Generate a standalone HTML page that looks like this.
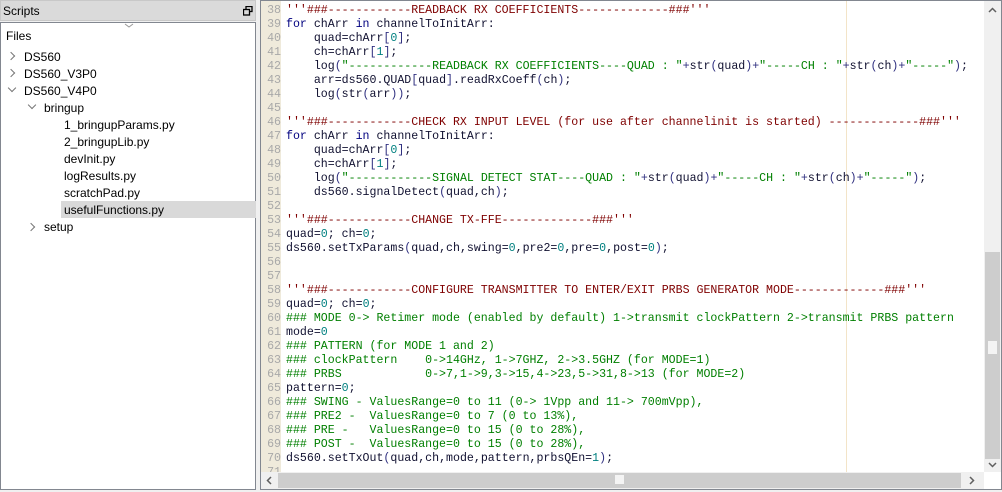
<!DOCTYPE html>
<html><head><meta charset="utf-8"><style>
body{margin:0;width:1002px;height:492px;background:#f0f0f0;position:relative;overflow:hidden;font-family:"Liberation Sans",sans-serif}
.hdr{position:absolute;left:0;top:0;width:256px;height:21px;background:#dadada;border:1px solid #c8c8c8;box-sizing:border-box;font-size:12px;line-height:20px;padding-left:2px;color:#000}
.tree{position:absolute;left:0;top:22px;width:256px;height:468px;background:#fff;border:1px solid #828790;box-sizing:border-box}
.t{position:absolute;font-size:12px;line-height:17px;height:17px;color:#000;white-space:nowrap}
.chev{position:absolute;width:5px;height:5px;border-right:1.3px solid #777;border-bottom:1.3px solid #777}
.ed{position:absolute;left:260px;top:0;width:742px;height:490px;background:#fff;border:1px solid #828790;box-sizing:border-box;overflow:hidden}
.gut{position:absolute;left:0;top:0;width:20px;height:471px;background:#efeadb}
.ln{position:absolute;left:0;width:20px;text-align:right;font-family:"Liberation Mono",monospace;font-size:11.6px;color:#a8a8a8;line-height:14px}
.code{position:absolute;left:25px;top:3px;font-family:"Liberation Mono",monospace;font-size:11.6px;line-height:14px;white-space:pre;color:#101030}
.k{color:#00007f}.d{color:#7f0000}.s{color:#008000}.c{color:#007f00}.n{color:#008080}.o{color:#303080}
</style></head><body>
<div class="hdr">Scripts
<svg style="position:absolute;left:242px;top:5px" width="10" height="10"><rect x="3" y="0.5" width="6" height="5" fill="none" stroke="#000" stroke-width="1.3"/><rect x="0.5" y="3.5" width="6" height="5.5" fill="#dadada" stroke="#000" stroke-width="1.3"/></svg></div>
<div class="tree">
<svg style="position:absolute;left:123px;top:0" width="10" height="6"><path d="M1 1 L5 4 L9 1" fill="none" stroke="#999"/></svg>
<div class="t" style="left:5px;top:5px">Files</div>
<div class="chev" style="left:7px;top:30px;transform:rotate(-45deg)"></div>
<div class="t" style="left:23px;top:26px">DS560</div>
<div class="chev" style="left:7px;top:47px;transform:rotate(-45deg)"></div>
<div class="t" style="left:23px;top:43px">DS560_V3P0</div>
<div class="chev" style="left:8px;top:62px;transform:rotate(45deg)"></div>
<div class="t" style="left:23px;top:60px">DS560_V4P0</div>
<div class="chev" style="left:28px;top:79px;transform:rotate(45deg)"></div>
<div class="t" style="left:43px;top:77px">bringup</div>
<div class="t" style="left:63px;top:94px">1_bringupParams.py</div>
<div class="t" style="left:63px;top:111px">2_bringupLib.py</div>
<div class="t" style="left:63px;top:128px">devInit.py</div>
<div class="t" style="left:63px;top:145px">logResults.py</div>
<div class="t" style="left:63px;top:162px">scratchPad.py</div>
<div style="position:absolute;left:60px;top:178px;width:195px;height:17px;background:#d9d9d9"></div>
<div class="t" style="left:63px;top:179px">usefulFunctions.py</div>
<div class="chev" style="left:27px;top:201px;transform:rotate(-45deg)"></div>
<div class="t" style="left:43px;top:196px">setup</div>
</div>
<div class="ed">
<div class="gut"></div>
<div style="position:absolute;left:585px;top:0;width:1px;height:471px;background:#f3e4c8"></div>
<div class="ln" style="top:3px">38<br>39<br>40<br>41<br>42<br>43<br>44<br>45<br>46<br>47<br>48<br>49<br>50<br>51<br>52<br>53<br>54<br>55<br>56<br>57<br>58<br>59<br>60<br>61<br>62<br>63<br>64<br>65<br>66<br>67<br>68<br>69<br>70<br>71</div>
<div class="code"><span class="d">'''###------------READBACK RX COEFFICIENTS-------------###'''</span>
<span class="k">for</span> chArr <span class="k">in</span> channelToInitArr:
    quad=chArr<span class="o">[</span><span class="n">0</span><span class="o">]</span>;
    ch=chArr<span class="o">[</span><span class="n">1</span><span class="o">]</span>;
    log<span class="o">(</span><span class="s">"------------READBACK RX COEFFICIENTS----QUAD : "</span><span class="o">+</span>str<span class="o">(</span>quad<span class="o">)+</span><span class="s">"-----CH : "</span><span class="o">+</span>str<span class="o">(</span>ch<span class="o">)+</span><span class="s">"-----"</span><span class="o">)</span>;
    arr=ds560.QUAD<span class="o">[</span>quad<span class="o">]</span>.readRxCoeff<span class="o">(</span>ch<span class="o">)</span>;
    log<span class="o">(</span>str<span class="o">(</span>arr<span class="o">))</span>;

<span class="d">'''###------------CHECK RX INPUT LEVEL (for use after channelinit is started) -------------###'''</span>
<span class="k">for</span> chArr <span class="k">in</span> channelToInitArr:
    quad=chArr<span class="o">[</span><span class="n">0</span><span class="o">]</span>;
    ch=chArr<span class="o">[</span><span class="n">1</span><span class="o">]</span>;
    log<span class="o">(</span><span class="s">"------------SIGNAL DETECT STAT----QUAD : "</span><span class="o">+</span>str<span class="o">(</span>quad<span class="o">)+</span><span class="s">"-----CH : "</span><span class="o">+</span>str<span class="o">(</span>ch<span class="o">)+</span><span class="s">"-----"</span><span class="o">)</span>;
    ds560.signalDetect<span class="o">(</span>quad,ch<span class="o">)</span>;

<span class="d">'''###------------CHANGE TX-FFE-------------###'''</span>
quad=<span class="n">0</span>; ch=<span class="n">0</span>;
ds560.setTxParams<span class="o">(</span>quad,ch,swing=<span class="n">0</span>,pre2=<span class="n">0</span>,pre=<span class="n">0</span>,post=<span class="n">0</span><span class="o">)</span>;


<span class="d">'''###------------CONFIGURE TRANSMITTER TO ENTER/EXIT PRBS GENERATOR MODE-------------###'''</span>
quad=<span class="n">0</span>; ch=<span class="n">0</span>;
<span class="c">### MODE 0-&gt; Retimer mode (enabled by default) 1-&gt;transmit clockPattern 2-&gt;transmit PRBS pattern</span>
mode=<span class="n">0</span>
<span class="c">### PATTERN (for MODE 1 and 2)</span>
<span class="c">### clockPattern    0-&gt;14GHz, 1-&gt;7GHZ, 2-&gt;3.5GHZ (for MODE=1)</span>
<span class="c">### PRBS            0-&gt;7,1-&gt;9,3-&gt;15,4-&gt;23,5-&gt;31,8-&gt;13 (for MODE=2)</span>
pattern=<span class="n">0</span>;
<span class="c">### SWING - ValuesRange=0 to 11 (0-&gt; 1Vpp and 11-&gt; 700mVpp),</span>
<span class="c">### PRE2 -  ValuesRange=0 to 7 (0 to 13%),</span>
<span class="c">### PRE -   ValuesRange=0 to 15 (0 to 28%),</span>
<span class="c">### POST -  ValuesRange=0 to 15 (0 to 28%),</span>
ds560.setTxOut<span class="o">(</span>quad,ch,mode,pattern,prbsQEn=<span class="n">1</span><span class="o">)</span>;
</div>
<div style="position:absolute;left:723px;top:0;width:17px;height:471px;background:#f0f0f0"></div>
<svg style="position:absolute;left:727px;top:6px" width="9" height="6"><path d="M1 5 L4.5 1.5 L8 5" fill="none" stroke="#606060" stroke-width="1.5"/></svg>
<div style="position:absolute;left:724px;top:251px;width:15px;height:207px;background:#cdcdcd"></div>
<div style="position:absolute;left:727px;top:340px;width:9px;height:13px;background:#f4f4f4"></div>
<svg style="position:absolute;left:727px;top:461px" width="9" height="6"><path d="M1 1 L4.5 4.5 L8 1" fill="none" stroke="#606060" stroke-width="1.5"/></svg>
<div style="position:absolute;left:0;top:471px;width:723px;height:17px;background:#f0f0f0"></div>
<svg style="position:absolute;left:5px;top:475px" width="6" height="9"><path d="M5 1 L1.5 4.5 L5 8" fill="none" stroke="#606060" stroke-width="1.5"/></svg>
<div style="position:absolute;left:17px;top:472px;width:683px;height:15px;background:#cdcdcd"></div>
<div style="position:absolute;left:354px;top:474px;width:9px;height:9px;background:#f4f4f4"></div>
<svg style="position:absolute;left:708px;top:475px" width="6" height="9"><path d="M1 1 L4.5 4.5 L1 8" fill="none" stroke="#606060" stroke-width="1.5"/></svg>
<div style="position:absolute;left:723px;top:471px;width:17px;height:17px;background:#fff"></div>
</div>
</body></html>
